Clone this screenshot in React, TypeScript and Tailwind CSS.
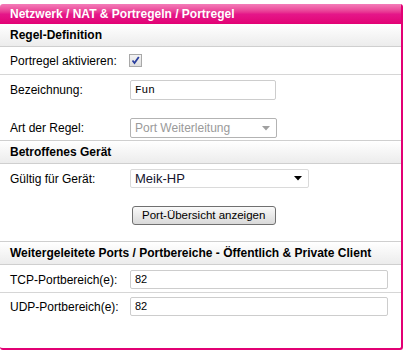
import React from "react";

const SectionHeader = ({ title, top = true }: { title: string; top?: boolean }) => (
  <div
    className={`flex items-center border-b border-[#cfcfcf] bg-gradient-to-b from-white to-[#ececec] pl-[10px] text-[12px] font-bold text-black ${
      top ? "h-[24px] border-t" : "h-[23px]"
    }`}
  >
    {title}
  </div>
);

const Label = ({ children }: { children: React.ReactNode }) => (
  <div className="w-[130px] shrink-0 pl-[10px] text-[12px] text-black">{children}</div>
);

const Arrow = ({ color }: { color: string }) => (
  <svg width="8" height="5" viewBox="0 0 8 5" className="shrink-0">
    <path d="M0 0 H8 L4 4.5 Z" fill={color} />
  </svg>
);

export default function App() {
  return (
    <div className="h-[355px] w-[408px] bg-white font-['Liberation_Sans',Arial,sans-serif]">
      <div className="mt-[4px] flex h-[346px] w-[403px] flex-col overflow-hidden rounded-[3px] border-b-2 border-r-2 border-[#e20074]">
        {/* title bar */}
        <div className="flex h-[20px] shrink-0 items-center bg-gradient-to-b from-[#f37cb9] via-[#e5168a] to-[#e20074] pl-[10px] text-[12px] font-bold text-white">
          Netzwerk / NAT &amp; Portregeln / Portregel
        </div>

        <SectionHeader title="Regel-Definition" top={false} />

        <div className="flex h-[28px] items-center border-b border-[#d6d6d6]">
          <Label>Portregel aktivieren:</Label>
          <div className="-ml-[1px] flex h-[13px] w-[13px] items-center justify-center border border-[#a8a8a8] bg-gradient-to-b from-[#f4f4f4] to-[#dedede]">
            <svg width="9" height="9" viewBox="0 0 9 9">
              <path d="M1.5 4.5 L3.5 7 L7.8 1" stroke="#2b3f9e" strokeWidth="1.8" fill="none" />
            </svg>
          </div>
        </div>

        <div className="flex flex-col pb-[2px] pt-[5px]">
          <div className="flex items-center">
            <Label>Bezeichnung:</Label>
            <div className="flex h-[20px] w-[146px] items-center rounded-[2px] border border-[#cdcdcd] pl-[4px] font-mono text-[11px] text-black">
              Fun
            </div>
          </div>
          <div className="mt-[18px] flex items-center">
            <Label>Art der Regel:</Label>
            <div className="flex h-[20px] w-[147px] items-center justify-between rounded-[2px] border border-[#b3b3b3] pl-[4px] pr-[6px] text-[12px] text-[#9a9a9a]">
              Port Weiterleitung
              <Arrow color="#a0a0a0" />
            </div>
          </div>
        </div>

        <SectionHeader title="Betroffenes Gerät" />

        <div className="flex flex-col pb-[16px] pt-[5px]">
          <div className="flex items-center">
            <Label>Gültig für Gerät:</Label>
            <div className="flex h-[19px] w-[179px] items-center justify-between rounded-[2px] border border-[#dadada] pl-[4px] pr-[6px] text-[13px] text-[#14142e]">
              Meik-HP
              <Arrow color="#000" />
            </div>
          </div>
          <div className="mt-[18px] flex">
            <div className="w-[132px] shrink-0" />
            <div className="flex h-[19px] w-[144px] items-center rounded-[3px] border border-[#707070] bg-gradient-to-b from-[#fafafa] to-[#d9d9d9] pl-[9px] text-[11.5px] text-black">
              Port-Übersicht anzeigen
            </div>
          </div>
        </div>

        <SectionHeader title="Weitergeleitete Ports / Portbereiche - Öffentlich & Private Client" />

        <div className="flex items-center border-b border-[#d6d6d6] pb-[3px] pt-[5px]">
          <Label>TCP-Portbereich(e):</Label>
          <div className="flex h-[19px] w-[258px] items-center rounded-[2px] border border-[#cdcdcd] pl-[4px] text-[11px] text-black">
            82
          </div>
        </div>
        <div className="flex items-center pt-[4px]">
          <Label>UDP-Portbereich(e):</Label>
          <div className="flex h-[19px] w-[258px] items-center rounded-[2px] border border-[#cdcdcd] pl-[4px] text-[11px] text-black">
            82
          </div>
        </div>
        <div className="flex-1" />
      </div>
    </div>
  );
}
